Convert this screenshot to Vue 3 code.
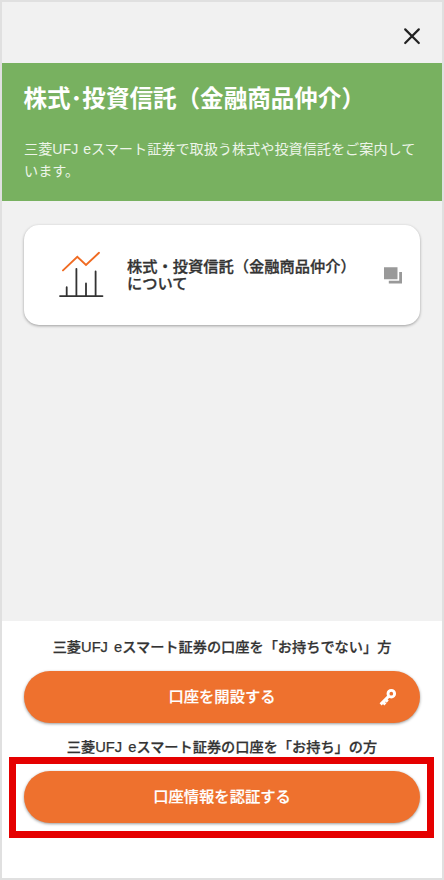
<script setup>
const title = '株式･投資信託（金融商品仲介）'
const description = ['三菱UFJ eスマート証券で取扱う株式や投資信託をご案内して', 'います。']
const cardLines = ['株式・投資信託（金融商品仲介）', 'について']
</script>

<template>
  <div class="screen">
    <header class="topbar">
      <button class="close" aria-label="閉じる">
        <svg width="18" height="18" viewBox="0 0 18 18"><path d="M2.2 2.4L15.8 16M15.8 2.4L2.2 16" /></svg>
      </button>
    </header>
    <section class="hero">
      <h1>{{ title }}</h1>
      <p><span v-for="line in description" :key="line">{{ line }}</span></p>
    </section>
    <main class="content">
      <a class="card">
        <svg class="chart" width="46" height="48" viewBox="0 0 46 48">
          <path class="trend" d="M4 19.4L18.3 5.8L27 14L40 1.8" />
          <path class="bars" d="M1 45.1H43.5M7.7 45V36.2M17.4 45V17.8M27 45V32.5M36.6 45V20.5" />
        </svg>
        <span class="card-text"><span v-for="line in cardLines" :key="line">{{ line }}</span></span>
        <svg class="window" width="18" height="17" viewBox="0 0 18 17">
          <path d="M0 0.3H13.5V12.3H0ZM15.2 5H18V16.5H4.8V13.8H15.2Z" />
        </svg>
      </a>
    </main>
    <footer class="actions">
      <p class="label">三菱<span class="latin">UFJ e</span>スマート証券の口座を「お持ちでない」方</p>
      <button class="cta">
        口座を開設する
        <svg class="key" width="18" height="18" viewBox="0 0 18 18">
          <circle cx="12.3" cy="5.7" r="3.3" />
          <path d="M10.1 7.9L1.6 16.4M3.7 13.7L6.4 16.4M6.3 11.2L8.7 13.6" />
        </svg>
      </button>
      <p class="label second">三菱<span class="latin">UFJ e</span>スマート証券の口座を「お持ち」の方</p>
      <div class="highlight">
        <button class="cta">口座情報を認証する</button>
      </div>
    </footer>
  </div>
</template>

<style>
body { margin: 0; }
</style>

<style scoped>
.screen {
  box-sizing: border-box;
  width: 444px;
  height: 880px;
  border: 2px solid #e0e0e0;
  background: #f1f1f1;
  color: #333;
  display: flex;
  flex-direction: column;
  font-family: "Liberation Sans", "Noto Sans CJK JP", sans-serif;
  overflow: hidden;
}
p, h1 { margin: 0; }
button { border: 0; padding: 0; font-family: inherit; }
.topbar {
  height: 61px;
  box-sizing: border-box;
  padding: 25px 21px 0 0;
  display: flex;
  justify-content: flex-end;
  align-items: flex-start;
}
.close { display: block; width: 18px; height: 18px; background: none; }
.close svg { display: block; fill: none; stroke: #222; stroke-width: 2.2; stroke-linecap: round; }
.hero {
  box-sizing: border-box;
  height: 138px;
  padding: 17px 22px 0;
  background: #78b160;
  color: #fff;
}
h1 {
  margin-left: -0.5px;
  font-family: "Noto Sans CJK JP", sans-serif;
  font-size: 23.55px;
  line-height: 34px;
  font-weight: 700;
  white-space: nowrap;
}
.hero p { margin-top: 25px; font-size: 14.15px; line-height: 21.5px; color: #edf5e9; word-spacing: 1px; }
.hero p span { display: block; white-space: nowrap; }
.content { flex: 1; padding: 24px 22px 0; }
.card {
  box-sizing: border-box;
  height: 100px;
  padding: 0 18px 0 35px;
  border-radius: 15px;
  background: #fff;
  box-shadow: 0 1px 3px rgba(0, 0, 0, 0.35);
  display: flex;
  align-items: center;
}
.chart { fill: none; margin-right: 22px; }
.trend { stroke: #f06b22; stroke-width: 1.9; stroke-linecap: round; }
.bars { stroke: #333; stroke-width: 1.8; stroke-linecap: round; }
.card-text {
  flex: 1;
  margin-bottom: 2px;
  font-family: "Noto Sans CJK JP", sans-serif;
  font-size: 15.25px;
  line-height: 17px;
  font-weight: 500;
  white-space: nowrap;
  -webkit-text-stroke: 0.3px #333;
}
.card-text span { display: block; }
.window { fill: #999; }
.actions {
  box-sizing: border-box;
  height: 257px;
  padding: 15px 22px 0;
  background: #fff;
}
.label {
  height: 22px;
  line-height: 22px;
  margin-bottom: 13px;
  font-size: 14.2px;
  font-weight: 500;
  text-align: center;
  white-space: nowrap;
  -webkit-text-stroke: 0.25px #333;
}
.latin { font-size: 14.7px; word-spacing: 2px; line-height: 1; }
.label.second { margin: 13px 0 -1px; }
.cta {
  position: relative;
  display: block;
  width: 396px;
  height: 52px;
  border-radius: 26px;
  background: #ee712e;
  color: #fff;
  box-shadow: 0 1px 3px rgba(0, 0, 0, 0.4);
  font-size: 15.3px;
  font-weight: 500;
  line-height: 52px;
  text-align: center;
  -webkit-text-stroke: 0.2px #fff;
}
.key {
  position: absolute;
  right: 23px;
  top: 17px;
  fill: none;
  stroke: #fff;
  stroke-width: 2.9;
}
.highlight {
  box-sizing: border-box;
  width: 425px;
  height: 81px;
  margin-left: -15px;
  border: 7px solid #e50000;
  padding: 7px 7px 8px 8px;
}
</style>
